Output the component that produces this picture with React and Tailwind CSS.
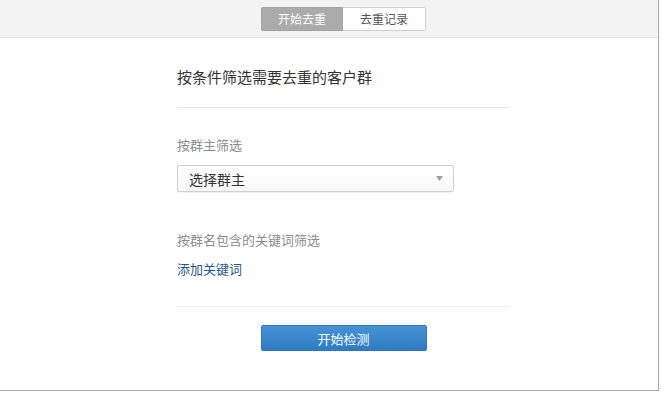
export default function App() {
  const font = { fontFamily: '"Noto Sans CJK SC", "Noto Sans", sans-serif' };
  return (
    <div className="w-[659px] h-[391px] bg-white border-r border-b border-[#a6a6a6] flex flex-col" style={font}>
      <div className="h-[38px] shrink-0 bg-[#f3f3f3] border-b border-[#e6e6e6] pl-[177px]">
        <div className="w-[333px] flex justify-center pt-[7px]">
          <div className="flex h-[24px]">
            <div className="w-[82px] bg-[#ababab] border border-[#a3a3a3] rounded-l-[2px] text-white text-[12px] flex items-center justify-center leading-none">开始去重</div>
            <div className="w-[83px] bg-white border border-l-0 border-[#cfcfcf] rounded-r-[2px] text-[#555] text-[12px] flex items-center justify-center leading-none">去重记录</div>
          </div>
        </div>
      </div>
      <div className="pl-[177px] pt-[29px]">
        <div className="w-[333px] flex flex-col">
          <div className="text-[15px] leading-[20px] text-[#333]">按条件筛选需要去重的客户群</div>
          <div className="h-px bg-[#e6e6e6] mt-[20px]"></div>
          <div className="mt-[28px] text-[13px] leading-[18px] text-[#8c8c8c]">按群主筛选</div>
          <div className="mt-[11px] w-[277px] h-[27px] border border-[#cfcfcf] rounded-[2px] bg-gradient-to-b from-white to-[#f7f7f7] flex items-center justify-between pl-[11px] pr-[10px] shadow-[0_1px_1px_rgba(0,0,0,0.05)]">
            <span className="text-[14px] text-[#333] leading-none">选择群主</span>
            <svg width="7" height="5" viewBox="0 0 7 5"><path d="M0 0 L7 0 L3.5 5 Z" fill="#a0a0a0" /></svg>
          </div>
          <div className="mt-[39px] text-[13px] leading-[18px] text-[#8c8c8c]">按群名包含的关键词筛选</div>
          <div className="mt-[11px] text-[13px] leading-[18px] text-[#1f5a8c]">添加关键词</div>
          <div className="h-px bg-[#ececec] mt-[28px]"></div>
          <div className="flex justify-center mt-[18px]">
            <div className="w-[166px] h-[26px] rounded-[2px] border border-[#2f78bd] bg-gradient-to-b from-[#4592d6] to-[#2f7cc2] text-white text-[13px] flex items-center justify-center leading-none">开始检测</div>
          </div>
        </div>
      </div>
    </div>
  );
}
